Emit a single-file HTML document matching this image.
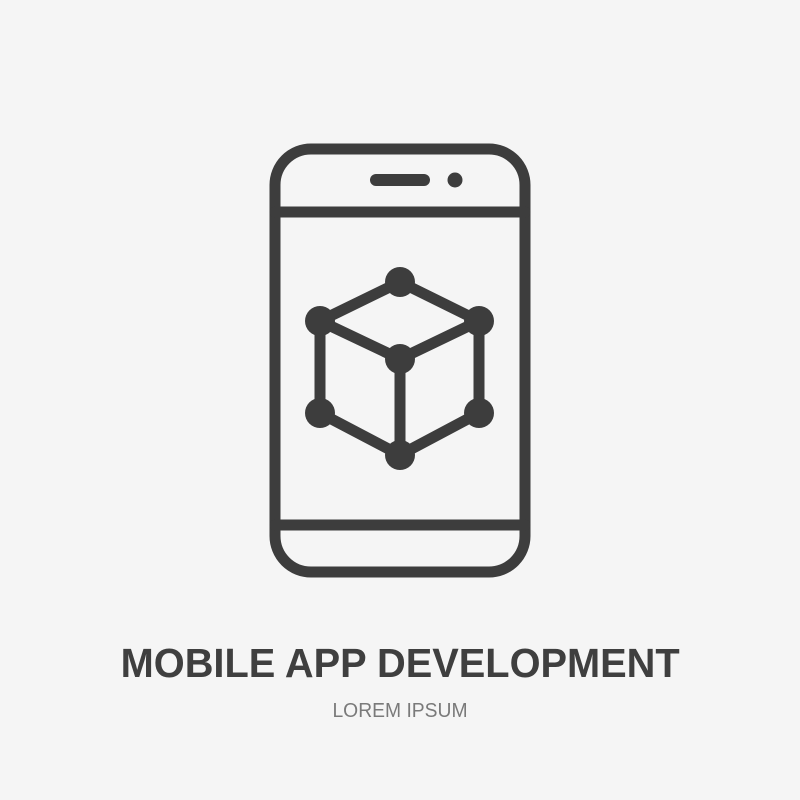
<!DOCTYPE html>
<html><head><style>
html,body{margin:0;padding:0;background:#f5f5f5;width:800px;height:800px;overflow:hidden}
.t{position:absolute;left:0;width:800px;text-align:center;font-family:"Liberation Sans",sans-serif}
.t span{display:inline-block}
</style></head><body>
<svg width="800" height="800" style="position:absolute;left:0;top:0">
<g fill="none" stroke="#3d3d3d" stroke-width="11" stroke-linecap="round" stroke-linejoin="round">
<rect x="275" y="149" width="250" height="423" rx="36"/>
<line x1="275" y1="212" x2="525" y2="212"/>
<line x1="275" y1="525" x2="525" y2="525"/>
<line x1="376" y1="180" x2="424" y2="180" stroke-width="12"/>
<path d="M400 282 L320 321 L400 359 L479 321 Z M320 321 L320 413 L400 455 L479 413 L479 321 M400 359 L400 455"/>
</g>
<g fill="#3d3d3d">
<circle cx="455" cy="180" r="7.5"/>
<circle cx="400" cy="282" r="15"/>
<circle cx="320" cy="321" r="15"/>
<circle cx="479" cy="321" r="15"/>
<circle cx="400" cy="359" r="15"/>
<circle cx="320" cy="413" r="15"/>
<circle cx="479" cy="413" r="15"/>
<circle cx="400" cy="455" r="15"/>
</g>
</svg>
<div class="t" style="top:640px;font-size:41px;font-weight:bold;color:#3f3f3f"><span style="transform:scaleX(0.97)">MOBILE APP DEVELOPMENT</span></div>
<div class="t" style="top:700px;font-size:20px;color:#7a7a7a"><span style="transform:scaleX(0.965)">LOREM IPSUM</span></div>
</body></html>
